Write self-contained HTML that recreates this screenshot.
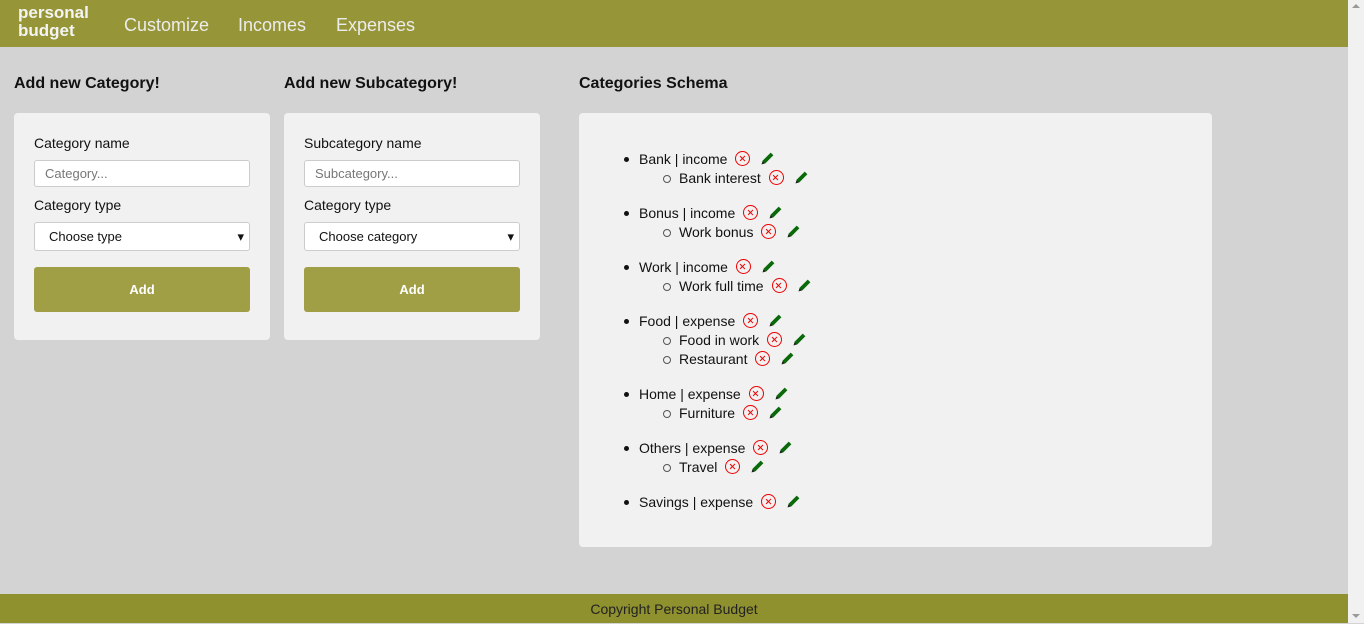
<!DOCTYPE html>
<html><head><style>
*{box-sizing:border-box;margin:0;padding:0}
body{width:1364px;height:623px;overflow:hidden;background:#d3d3d3;font-family:"Liberation Sans",sans-serif;position:relative;color:#111}
.nav{position:absolute;left:0;top:0;width:1348px;height:47px;background:#969638}
.logo{position:absolute;left:18px;top:4px;color:#f4f4f4;font-weight:bold;font-size:17px;line-height:18px}
.nl{position:absolute;top:15px;color:#ececec;font-size:18px}
.sb{position:absolute;left:1348px;top:0;width:16px;height:623px;background:#f1f1f1}
.foot{position:absolute;left:0;top:594px;width:1348px;height:29px;background:#8f902e;color:#222;font-size:14px;text-align:center;line-height:30px}
h2{position:absolute;top:75px;font-size:16px;font-weight:bold;color:#111}
.card{position:absolute;background:#f1f1f1;border-radius:4px}
.lbl{position:absolute;left:20px;font-size:14px}
.inp{position:absolute;left:20px;width:216px;background:#fff;border:1px solid #ccc;border-radius:3px;font-size:13px;padding-left:10px;color:#777}
.sel{color:#111;padding-left:14px}
.sel:after{content:"▾";position:absolute;right:5px;top:0;font-size:13px}
.btn{position:absolute;left:20px;top:154px;width:216px;height:45px;background:#a09f45;border-radius:3px;color:#fff;font-size:13px;font-weight:bold;text-align:center;line-height:45px}
.it{position:absolute;font-size:14px;line-height:19px;white-space:nowrap}
.it.p:before{content:"";position:absolute;left:-15px;top:7px;width:5px;height:5px;border-radius:50%;background:#111}
.it.c:before{content:"";position:absolute;left:-16px;top:6px;width:6px;height:6px;border-radius:50%;border:1px solid #555}
.x{display:inline-block;width:15px;height:15px;border:1.5px solid #e00;border-radius:50%;margin-left:8px;vertical-align:-2px;position:relative}
.x:before,.x:after{content:"";position:absolute;left:5.5px;top:2.5px;width:1.2px;height:7px;background:#e00;transform:rotate(45deg)}
.x:after{transform:rotate(-45deg)}
.pn{display:inline-block;width:15px;height:15px;margin-left:10px;vertical-align:-2px}
</style></head><body>
<div class="nav">
<div class="logo">personal<br>budget</div>
<div class="nl" style="left:124px">Customize</div>
<div class="nl" style="left:238px">Incomes</div>
<div class="nl" style="left:336px">Expenses</div>
</div>
<h2 style="left:14px">Add new Category!</h2>
<h2 style="left:284px">Add new Subcategory!</h2>
<h2 style="left:579px">Categories Schema</h2>
<div class="card" style="left:14px;top:113px;width:256px;height:227px">
<div class="lbl" style="top:22px">Category name</div>
<div class="inp" style="top:47px;height:27px;line-height:25px">Category...</div>
<div class="lbl" style="top:84px">Category type</div>
<div class="inp sel" style="top:109px;height:29px;line-height:27px">Choose type</div>
<div class="btn">Add</div>
</div>
<div class="card" style="left:284px;top:113px;width:256px;height:227px">
<div class="lbl" style="top:22px">Subcategory name</div>
<div class="inp" style="top:47px;height:27px;line-height:25px">Subcategory...</div>
<div class="lbl" style="top:84px">Category type</div>
<div class="inp sel" style="top:109px;height:29px;line-height:27px">Choose category</div>
<div class="btn">Add</div>
</div>
<div class="card" style="left:579px;top:113px;width:633px;height:434px"></div>
<svg width="0" height="0" style="position:absolute"><defs><symbol id="p" viewBox="0 0 14 14"><path d="M1.5 12.5 L2.5 9 L10 1.5 L12.5 4 L5 11.5 Z" fill="#0a6a0a"/><path d="M1.5 12.5 L2.5 9.5 L4.5 11.5 Z" fill="#222"/></symbol></defs></svg>
<div class="it p" style="left:639px;top:150px">Bank | income<span class="x"></span><svg class="pn"><use href="#p"/></svg></div>
<div class="it c" style="left:679px;top:169px">Bank interest<span class="x"></span><svg class="pn"><use href="#p"/></svg></div>
<div class="it p" style="left:639px;top:204px">Bonus | income<span class="x"></span><svg class="pn"><use href="#p"/></svg></div>
<div class="it c" style="left:679px;top:223px">Work bonus<span class="x"></span><svg class="pn"><use href="#p"/></svg></div>
<div class="it p" style="left:639px;top:258px">Work | income<span class="x"></span><svg class="pn"><use href="#p"/></svg></div>
<div class="it c" style="left:679px;top:277px">Work full time<span class="x"></span><svg class="pn"><use href="#p"/></svg></div>
<div class="it p" style="left:639px;top:312px">Food | expense<span class="x"></span><svg class="pn"><use href="#p"/></svg></div>
<div class="it c" style="left:679px;top:331px">Food in work<span class="x"></span><svg class="pn"><use href="#p"/></svg></div>
<div class="it c" style="left:679px;top:350px">Restaurant<span class="x"></span><svg class="pn"><use href="#p"/></svg></div>
<div class="it p" style="left:639px;top:385px">Home | expense<span class="x"></span><svg class="pn"><use href="#p"/></svg></div>
<div class="it c" style="left:679px;top:404px">Furniture<span class="x"></span><svg class="pn"><use href="#p"/></svg></div>
<div class="it p" style="left:639px;top:439px">Others | expense<span class="x"></span><svg class="pn"><use href="#p"/></svg></div>
<div class="it c" style="left:679px;top:458px">Travel<span class="x"></span><svg class="pn"><use href="#p"/></svg></div>
<div class="it p" style="left:639px;top:493px">Savings | expense<span class="x"></span><svg class="pn"><use href="#p"/></svg></div>
<div class="foot">Copyright Personal Budget</div>
<div class="sb"><div style="position:absolute;left:4px;top:4px;border:4px solid transparent;border-bottom:4px solid #999;border-top:0"></div><div style="position:absolute;left:4px;bottom:5px;border:4px solid transparent;border-top:4px solid #999;border-bottom:0"></div></div>
</body></html>
